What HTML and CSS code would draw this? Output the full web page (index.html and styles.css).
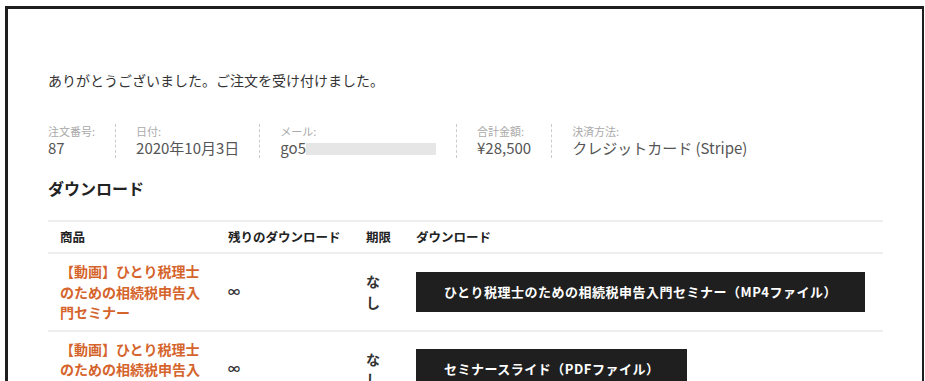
FILE: index.html
```html
<!DOCTYPE html>
<html lang="ja">
<head>
  <meta charset="UTF-8">
  <meta name="viewport" content="width=device-width, initial-scale=1.0">
  <title>注文完了</title>
  <link rel="stylesheet" href="styles.css">
</head>
<body>
  <div class="frame">
    <p class="thanks">ありがとうございました。ご注文を受け付けました。</p>

    <ul class="order-meta">
      <li>
        <span class="meta-label">注文番号:</span>
        <strong>87</strong>
      </li>
      <li>
        <span class="meta-label">日付:</span>
        <strong>2020年10月3日</strong>
      </li>
      <li>
        <span class="meta-label">メール:</span>
        <strong>go5<span class="redact"></span></strong>
      </li>
      <li>
        <span class="meta-label">合計金額:</span>
        <strong>¥28,500</strong>
      </li>
      <li>
        <span class="meta-label">決済方法:</span>
        <strong>クレジットカード (Stripe)</strong>
      </li>
    </ul>

    <h2>ダウンロード</h2>

    <table class="downloads">
      <thead>
        <tr>
          <th class="col-product">商品</th>
          <th class="col-remain">残りのダウンロード</th>
          <th class="col-expire">期限</th>
          <th class="col-file">ダウンロード</th>
        </tr>
      </thead>
      <tbody>
        <tr>
          <td><a href="#">【動画】ひとり税理士のための相続税申告入門セミナー</a></td>
          <td class="remain">∞</td>
          <td>なし</td>
          <td><a class="button" href="#">ひとり税理士のための相続税申告入門セミナー（MP4ファイル）</a></td>
        </tr>
        <tr>
          <td><a href="#">【動画】ひとり税理士のための相続税申告入門セミナー</a></td>
          <td class="remain">∞</td>
          <td>なし</td>
          <td><a class="button" href="#">セミナースライド（PDFファイル）</a></td>
        </tr>
      </tbody>
    </table>
  </div>
</body>
</html>
```

FILE: styles.css
```css
body {
  margin: 0;
  background-color: #fff;
  font-family: "Noto Sans CJK JP", "Noto Sans", sans-serif;
  color: #333;
}
.frame {
  margin: 6px 1px 0 5px;
  padding: 59px 39px 40px 40px;
  border: 3px solid #1e1e1e;
  border-right-width: 2px;
  border-bottom: none;
  min-height: 400px;
}
.thanks {
  margin: 0 0 32px;
  font-size: 14px;
  line-height: 24px;
}
.order-meta {
  display: flex;
  list-style: none;
  margin: 0 0 18px;
  padding: 0;
}
.order-meta li {
  padding: 0 20px;
  border-left: 1px dashed #ccc;
}
.order-meta li:first-child {
  padding-left: 0;
  border-left: none;
}
.meta-label {
  display: block;
  font-size: 11px;
  line-height: 14px;
  color: #aaa;
}
.order-meta strong {
  display: block;
  font-size: 15px;
  font-weight: 400;
  color: #555;
  line-height: 20px;
}
.redact {
  display: inline-block;
  width: 130px;
  height: 12px;
  background-color: #e6e6e6;
  vertical-align: -1px;
}
h2 {
  margin: 0 0 20px;
  font-size: 16px;
  line-height: 24px;
  color: #222;
}
.downloads {
  width: 100%;
  table-layout: fixed;
  border-collapse: collapse;
  border-top: 2px solid #eee;
  font-size: 14px;
}
.downloads th,
.downloads td {
  box-sizing: border-box;
}
.col-product { width: 168px; }
.col-remain { width: 138px; }
.col-expire { width: 50px; }
.downloads th {
  text-align: left;
  font-size: 12.5px;
  line-height: 18px;
  color: #222;
  padding: 6px 12px;
  border-bottom: 2px solid #eee;
}
.downloads td {
  padding: 7px 12px;
  line-height: 20.5px;
  vertical-align: middle;
  border-bottom: 2px solid #eee;
  font-weight: 700;
  color: #333;
}
.downloads td a {
  color: #d5642c;
  text-decoration: none;
}
.downloads td a.button {
  display: inline-block;
  padding: 11px 28px;
  line-height: 18px;
  font-size: 13px;
  letter-spacing: 0.5px;
  white-space: nowrap;
  color: #fff;
  background-color: #1f1f1f;
}
.remain {
  font-size: 12px;
}
```
